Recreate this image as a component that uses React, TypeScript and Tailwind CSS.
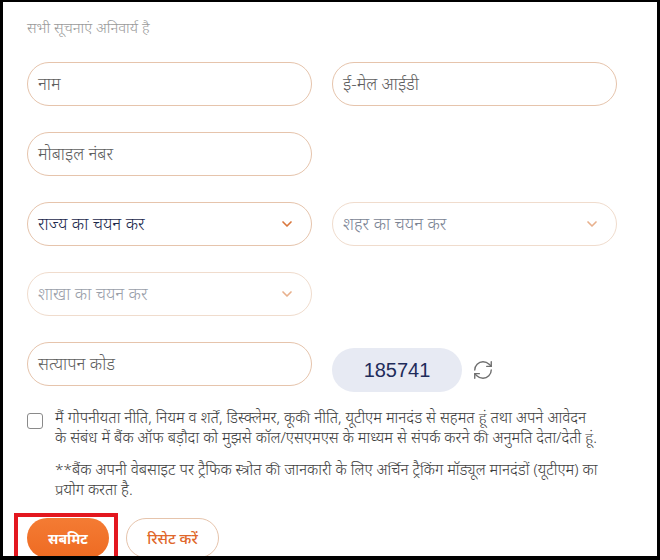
import { ChevronDown, RefreshCw } from 'lucide-react';

const font = { fontFamily: '"Noto Sans", "Liberation Sans", sans-serif' };

const TextField = ({ placeholder }: { placeholder: string }) => (
  <div className="h-[44px] w-[285px] rounded-full border border-[#e6c4ac] bg-white px-[10px] flex items-center">
    <span className="text-[17px] font-light text-[#5f5f5f]">{placeholder}</span>
  </div>
);

const SelectField = ({ label, tone }: { label: string; tone: 'active' | 'idle' | 'disabled' }) => {
  const text =
    tone === 'active' ? 'text-[#1d2a4d]' : tone === 'idle' ? 'text-[#7b8494]' : 'text-[#9aa0aa]';
  const border = tone === 'active' ? 'border-[#e6c4ac]' : 'border-[#f0dccd]';
  const chevron = tone === 'active' ? 'text-[#d9763c]' : 'text-[#e8b08c]';
  return (
    <div className={`h-[44px] w-[285px] rounded-full border ${border} bg-white pl-[10px] pr-[16px] flex items-center justify-between`}>
      <span className={`text-[17px] font-light ${text}`}>{label}</span>
      <ChevronDown size={16} strokeWidth={2.5} className={chevron} />
    </div>
  );
};

export default function App() {
  return (
    <div
      className="w-[660px] h-[560px] overflow-hidden bg-white border-black border-t-2 border-l-[3px] border-r-[3px] border-b-4"
      style={font}
    >
      <div className="pl-[24px] pt-[15px]">
        {/* Note */}
        <p className="text-[15px] font-light italic text-[#9a9a9a] leading-[20px]">सभी सूचनाएं अनिवार्य है</p>

        {/* Fields */}
        <div className="mt-[25px] grid grid-cols-[285px_285px] gap-x-[20px] gap-y-[26px]">
          <TextField placeholder="नाम" />
          <TextField placeholder="ई-मेल आईडी" />
          <TextField placeholder="मोबाइल नंबर" />
          <div />
          <SelectField label="राज्य का चयन कर" tone="active" />
          <SelectField label="शहर का चयन कर" tone="idle" />
          <SelectField label="शाखा का चयन कर" tone="disabled" />
          <div />
          <TextField placeholder="सत्यापन कोड" />
          <div className="flex items-center gap-[10px] pt-[6px]">
            <div
              className="h-[44px] w-[130px] rounded-full bg-[#e7eaf3] flex items-center justify-center text-[20px] text-[#1f2c5a]"
              style={{ fontFamily: '"Liberation Sans", Arial, sans-serif' }}
            >
              185741
            </div>
            <RefreshCw size={22} strokeWidth={1.5} className="text-[#6f6f6f]" />
          </div>
        </div>

        {/* Consent */}
        <div className="mt-[16px] flex gap-[12px]">
          <div className="mt-[5px] h-[16px] w-[16px] shrink-0 rounded-[3px] border border-[#8a8a8a] bg-white" />
          <div className="w-[575px] text-[15.4px] font-light leading-[20px] text-[#3f3f3f]">
            <p>
              मैं गोपनीयता नीति, नियम व शर्तें, डिस्क्लेमर, कूकी नीति, यूटीएम मानदंड से सहमत हूं तथा अपने आवेदन
              <br />
              के संबंध में बैंक ऑफ बड़ौदा को मुझसे कॉल/एसएमएस के माध्यम से संपर्क करने की अनुमति देता/देती हूं.
            </p>
            <p className="mt-[12px]">
              **बैंक अपनी वेबसाइट पर ट्रैफिक स्त्रोत की जानकारी के लिए अर्चिन ट्रैकिंग मॉड्यूल मानदंडों (यूटीएम) का
              <br />
              प्रयोग करता है.
            </p>
          </div>
        </div>

        {/* Actions */}
        <div className="mt-[18px] flex gap-[17px]">
          <div className="relative">
            <button className="h-[40px] w-[82px] rounded-full bg-gradient-to-b from-[#f47b33] to-[#ee6b22] text-[14px] font-bold text-white">
              सबमिट
            </button>
            <div className="absolute -left-[13px] -top-[5px] h-[48px] w-[104px] border-4 border-[#e3171f]" />
          </div>
          <button className="h-[40px] w-[93px] rounded-full border border-[#e6c4ac] bg-white text-[15px] font-medium text-[#e0672b]">
            रिसेट करें
          </button>
        </div>
      </div>
    </div>
  );
}
